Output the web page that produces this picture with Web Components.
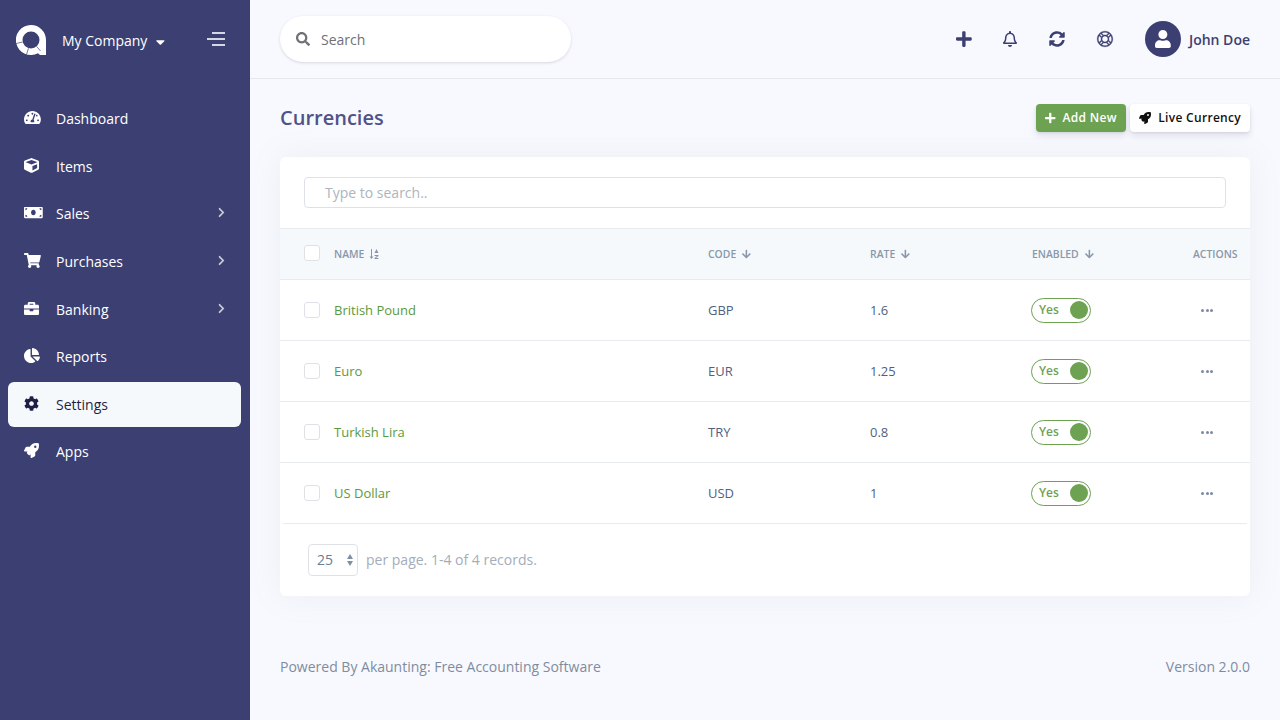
<!DOCTYPE html>
<html lang="en">
<head>
<meta charset="utf-8">
<title>Currencies</title>
<style>
    html, body { margin: 0; height: 100%; }
    body { font: 14px/1.5 "Open Sans", "Noto Sans", sans-serif; background: #f8f9fe; overflow: hidden; }
    app-shell { height: 720px; }
</style>
</head>
<body>

<app-shell>
    <side-bar slot="side">
        <nav-item icon="dash">Dashboard</nav-item>
        <nav-item icon="cube">Items</nav-item>
        <nav-item icon="money" arrow>Sales</nav-item>
        <nav-item icon="cart" arrow>Purchases</nav-item>
        <nav-item icon="case" arrow>Banking</nav-item>
        <nav-item icon="pie">Reports</nav-item>
        <nav-item icon="cog" active>Settings</nav-item>
        <nav-item icon="rocket">Apps</nav-item>
    </side-bar>
    <top-bar></top-bar>
    <page-head title="Currencies"></page-head>
    <data-card>
        <currency-row name="British Pound" code="GBP" rate="1.6"></currency-row>
        <currency-row name="Euro" code="EUR" rate="1.25"></currency-row>
        <currency-row name="Turkish Lira" code="TRY" rate="0.8"></currency-row>
        <currency-row name="US Dollar" code="USD" rate="1"></currency-row>
    </data-card>
    <page-foot></page-foot>
</app-shell>

<script>
    // font awesome 5 shapes, viewBox width first
    const ICONS = {
        dash: [576, 'M288 32C128.94 32 0 160.94 0 320c0 52.8 14.25 102.26 39.06 144.8 5.61 9.62 16.3 15.2 27.44 15.2h443c11.14 0 21.83-5.58 27.44-15.2C561.75 422.26 576 372.8 576 320c0-159.06-128.94-288-288-288zm0 64c14.71 0 26.58 10.13 30.32 23.65-1.11 2.26-2.64 4.23-3.45 6.67l-9.22 27.67c-5.13 3.49-10.97 6.01-17.64 6.01-17.67 0-32-14.33-32-32S270.33 96 288 96zM96 384c-17.67 0-32-14.33-32-32s14.33-32 32-32 32 14.33 32 32-14.33 32-32 32zm48-160c-17.67 0-32-14.33-32-32s14.33-32 32-32 32 14.33 32 32-14.33 32-32 32zm246.77-72.41l-61.33 184C343.13 347.33 352 364.54 352 384c0 11.72-3.38 22.55-8.88 32H232.88c-5.5-9.45-8.88-20.28-8.88-32 0-33.94 26.5-61.43 59.9-63.59l61.34-184.01c4.17-12.56 17.73-19.45 30.36-15.17 12.57 4.19 19.35 17.79 15.17 30.36zm14.66 57.2l15.52-46.55c3.47-1.29 7.13-2.23 11.05-2.23 17.67 0 32 14.33 32 32s-14.33 32-32 32c-11.38-.01-20.89-6.28-26.57-15.22zM480 384c-17.67 0-32-14.33-32-32s14.33-32 32-32 32 14.33 32 32-14.33 32-32 32z'],
        cube: [512, 'M239.1 6.3l-208 78c-18.7 7-31.1 25-31.1 45v225.1c0 18.2 10.3 34.8 26.5 42.9l208 104c13.5 6.8 29.4 6.8 42.9 0l208-104c16.3-8.1 26.5-24.8 26.5-42.9V129.3c0-20-12.4-37.9-31.1-44.9l-208-78C262 2.2 250 2.2 239.1 6.3zM256 68.4l192 72v1.1l-192 78-192-78v-1.1l192-72zm32 356V275.5l160-65v133.9l-160 80z'],
        money: [640, 'M608 64H32C14.33 64 0 78.33 0 96v320c0 17.67 14.33 32 32 32h576c17.67 0 32-14.33 32-32V96c0-17.67-14.33-32-32-32zM48 400v-64c35.35 0 64 28.65 64 64H48zm0-224v-64h64c0 35.35-28.65 64-64 64zm272 176c-44.19 0-80-42.99-80-96 0-53.02 35.82-96 80-96s80 42.98 80 96c0 53.03-35.83 96-80 96zm272 48h-64c0-35.35 28.65-64 64-64v64zm0-224c-35.35 0-64-28.65-64-64h64v64z'],
        cart: [576, 'M528.12 301.319l47.273-208C578.806 78.301 567.391 64 551.99 64H159.208l-9.166-44.81C147.758 8.021 137.93 0 126.529 0H24C10.745 0 0 10.745 0 24v16c0 13.255 10.745 24 24 24h69.883l70.248 343.435C147.325 417.1 136 435.222 136 456c0 30.928 25.072 56 56 56s56-25.072 56-56c0-15.674-6.447-29.835-16.824-40h209.647C430.447 426.165 424 440.326 424 456c0 30.928 25.072 56 56 56s56-25.072 56-56c0-22.172-12.888-41.332-31.579-50.405l5.517-24.276c3.413-15.018-8.002-29.319-23.403-29.319H218.117l-6.545-32h293.145c11.206 0 20.92-7.754 23.403-18.681z'],
        case: [512, 'M320 336c0 8.84-7.16 16-16 16h-96c-8.84 0-16-7.16-16-16v-48H0v144c0 25.6 22.4 48 48 48h416c25.6 0 48-22.4 48-48V288H320v48zm144-208h-80V80c0-25.6-22.4-48-48-48H176c-25.6 0-48 22.4-48 48v48H48c-25.6 0-48 22.4-48 48v80h512v-80c0-25.6-22.4-48-48-48zm-144 0H192V96h128v32z'],
        pie: [544, 'M527.79 288H290.5l158.03 158.03c6.04 6.04 15.98 6.53 22.19.68 38.7-36.46 65.32-85.61 73.13-140.86 1.34-9.46-6.51-17.85-16.06-17.85zm-15.83-64.8C503.72 103.74 408.26 8.28 288.8.04 279.68-.59 272 7.1 272 16.24V240h223.77c9.14 0 16.82-7.68 16.19-16.8zM224 288V50.71c0-9.55-8.39-17.4-17.84-16.06C86.99 51.49-4.1 155.6.14 280.37 4.5 408.51 114.83 513.59 243.03 511.98c50.4-.63 96.97-16.87 135.26-44.03 7.9-5.6 8.42-17.23 1.57-24.08L224 288z'],
        cog: [512, 'M487.4 315.7l-42.6-24.6c4.3-23.2 4.3-47 0-70.2l42.6-24.6c4.9-2.8 7.1-8.6 5.5-14-11.1-35.6-30-67.8-54.7-94.6-3.8-4.1-10-5.1-14.8-2.3L380.8 110c-17.9-15.4-38.5-27.3-60.8-35.1V25.8c0-5.6-3.9-10.5-9.4-11.7-36.7-8.2-74.3-7.8-109.2 0-5.5 1.2-9.4 6.1-9.4 11.7V75c-22.2 7.9-42.8 19.8-60.8 35.1L88.7 85.5c-4.9-2.8-11-1.9-14.8 2.3-24.7 26.7-43.6 58.9-54.7 94.6-1.7 5.4.6 11.2 5.5 14L67.3 221c-4.3 23.2-4.3 47 0 70.2l-42.6 24.6c-4.9 2.8-7.1 8.6-5.5 14 11.1 35.6 30 67.8 54.7 94.6 3.8 4.1 10 5.1 14.8 2.3l42.6-24.6c17.9 15.4 38.5 27.3 60.8 35.1v49.2c0 5.6 3.9 10.5 9.4 11.7 36.7 8.2 74.3 7.8 109.2 0 5.5-1.2 9.4-6.1 9.4-11.7v-49.2c22.2-7.9 42.8-19.8 60.8-35.1l42.6 24.6c4.9 2.8 11 1.9 14.8-2.3 24.7-26.7 43.6-58.9 54.7-94.6 1.5-5.5-.7-11.3-5.6-14.1zM256 336c-44.1 0-80-35.9-80-80s35.9-80 80-80 80 35.9 80 80-35.9 80-80 80z'],
        rocket: [512, 'M505.12 19.09c-1.19-5.53-6.66-11-12.21-12.18C460.72 0 435.51 0 410.41 0 307.18 0 245.27 55.2 199.05 128H94.84c-16.35.02-35.56 11.88-42.89 26.48L2.52 253.3A28.4 28.4 0 0 0 0 264a24 24 0 0 0 24 24h103.81l-22.47 22.47c-11.37 11.36-13 32.26 0 45.25l50.9 50.9c11.16 11.19 32.16 13.16 45.28 0L224 384.16V488a24 24 0 0 0 24 24 28.56 28.56 0 0 0 10.71-2.52l98.73-49.39c14.63-7.3 26.51-26.5 26.51-42.86V312.8c72.6-46.31 128.03-108.41 128.03-211.1.1-25.2.1-50.4-6.86-82.61zM384.04 168a40 40 0 1 1 40.01-40 40.02 40.02 0 0 1-40.01 40z'],
        right: [320, 'M285.476 272.971L91.132 467.314c-9.373 9.373-24.569 9.373-33.941 0l-22.667-22.667c-9.357-9.357-9.375-24.522-.04-33.901L188.505 256 34.484 101.255c-9.335-9.379-9.317-24.544.04-33.901l22.667-22.667c9.373-9.373 24.569-9.373 33.941 0L285.475 239.03c9.373 9.372 9.373 24.568.001 33.941z'],
        caret: [320, 'M31.3 192h257.3c17.8 0 26.7 21.5 14.1 34.1L174.1 354.8c-7.8 7.8-20.5 7.8-28.3 0L17.2 226.1C4.6 213.5 13.5 192 31.3 192z'],
        search: [512, 'M505 442.7L405.3 343c-4.5-4.5-10.6-7-17-7H372c27.6-35.3 44-79.7 44-128C416 93.1 322.9 0 208 0S0 93.1 0 208s93.1 208 208 208c48.3 0 92.7-16.4 128-44v16.3c0 6.4 2.5 12.5 7 17l99.7 99.7c9.4 9.4 24.6 9.4 33.9 0l28.3-28.3c9.4-9.4 9.4-24.6.1-34zM208 336c-70.7 0-128-57.2-128-128 0-70.7 57.2-128 128-128 70.7 0 128 57.2 128 128 0 70.7-57.2 128-128 128z'],
        plus: [448, 'M416 208H272V64c0-17.67-14.33-32-32-32h-32c-17.67 0-32 14.33-32 32v144H32c-17.67 0-32 14.33-32 32v32c0 17.67 14.33 32 32 32h144v144c0 17.67 14.33 32 32 32h32c17.67 0 32-14.33 32-32V304h144c17.67 0 32-14.33 32-32v-32c0-17.67-14.33-32-32-32z'],
        bell: [448, 'M224 512c35.32 0 63.97-28.65 63.97-64H160.03c0 35.35 28.65 64 63.97 64zm215.39-149.71c-19.32-20.76-55.47-51.99-55.47-154.29 0-77.7-54.48-139.9-127.94-155.16V32c0-17.67-14.32-32-31.98-32s-31.98 14.33-31.98 32v20.84C118.56 68.1 64.08 130.3 64.08 208c0 102.3-36.15 133.53-55.47 154.29-6 6.45-8.66 14.16-8.61 21.71.11 16.4 12.98 32 32.1 32h383.8c19.12 0 32-15.6 32.1-32 .05-7.55-2.61-15.27-8.61-21.71zM67.53 368c21.22-27.97 44.42-74.33 44.53-159.42 0-.2-.06-.38-.06-.58 0-61.86 50.14-112 112-112s112 50.14 112 112c0 .2-.06.38-.06.58.11 85.1 23.31 131.46 44.53 159.42H67.53z'],
        sync: [512, 'M370.72 133.28C339.458 104.008 298.888 87.962 255.848 88c-77.458.068-144.328 53.178-162.791 126.85-1.344 5.363-6.122 9.15-11.651 9.15H24.103c-7.498 0-13.194-6.807-11.807-14.176C33.933 94.924 134.813 8 256 8c66.448 0 126.791 26.136 171.315 68.685L463.03 40.97C478.149 25.851 504 36.559 504 57.941V192c0 13.255-10.745 24-24 24H345.941c-21.382 0-32.09-25.851-16.971-40.971l41.75-41.749zM32 296h134.059c21.382 0 32.09 25.851 16.971 40.971l-41.75 41.75c31.262 29.273 71.835 45.319 114.876 45.28 77.418-.07 144.315-53.144 162.787-126.849 1.344-5.363 6.122-9.15 11.651-9.15h57.304c7.498 0 13.194 6.807 11.807 14.176C478.067 417.076 377.187 504 256 504c-66.448 0-126.791-26.136-171.315-68.685L48.97 471.03C33.851 486.149 8 475.441 8 454.059V320c0-13.255 10.745-24 24-24z'],
        ring: [512, 'M256 8C119.033 8 8 119.033 8 256s111.033 248 248 248 248-111.033 248-248S392.967 8 256 8zm168.766 113.176l-62.885 62.885a128.711 128.711 0 0 0-33.941-33.941l62.885-62.885a217.323 217.323 0 0 1 33.941 33.941zM256 352c-52.935 0-96-43.065-96-96s43.065-96 96-96 96 43.065 96 96-43.065 96-96 96zM363.952 68.853l-66.14 66.14c-26.99-9.325-56.618-9.33-83.624 0l-66.139-66.14c66.716-38.524 149.23-38.499 215.903 0zM121.176 87.234l62.885 62.885a128.711 128.711 0 0 0-33.941 33.941l-62.885-62.885a217.323 217.323 0 0 1 33.941-33.941zm-52.323 60.814l66.139 66.14c-9.325 26.99-9.33 56.618 0 83.624l-66.139 66.14c-38.523-66.715-38.5-149.229 0-215.904zm18.381 242.776l62.885-62.885a128.711 128.711 0 0 0 33.941 33.941l-62.885 62.885a217.366 217.366 0 0 1-33.941-33.941zm60.814 52.323l66.139-66.14c26.99 9.325 56.618 9.33 83.624 0l66.14 66.14c-66.716 38.524-149.23 38.499-215.903 0zm242.776-18.381l-62.885-62.885a128.711 128.711 0 0 0 33.941-33.941l62.885 62.885a217.323 217.323 0 0 1-33.941 33.941zm52.323-60.814l-66.14-66.14c9.325-26.99 9.33-56.618 0-83.624l66.14-66.14c38.523 66.715 38.5 149.229 0 215.904z'],
        user: [448, 'M224 256c70.7 0 128-57.3 128-128S294.7 0 224 0 96 57.3 96 128s57.3 128 128 128zm89.6 32h-16.7c-22.2 10.2-46.9 16-72.9 16s-50.6-5.8-72.9-16h-16.7C60.2 288 0 348.2 0 422.4V464c0 26.5 21.5 48 48 48h352c26.5 0 48-21.5 48-48v-41.6c0-74.2-60.2-134.4-134.4-134.4z'],
        down: [448, 'M413.1 222.5l22.2 22.2c9.4 9.4 9.4 24.6 0 33.9L241 473c-9.4 9.4-24.6 9.4-33.9 0L12.7 278.6c-9.4-9.4-9.4-24.6 0-33.9l22.2-22.2c9.5-9.5 25-9.3 34.3.4L184 343.4V56c0-13.3 10.7-24 24-24h32c13.3 0 24 10.7 24 24v287.4l114.8-120.5c9.3-9.8 24.8-10 34.3-.4z']
    };

    const define = (tag, css, html) => {
        customElements.define(tag, class extends HTMLElement {
            connectedCallback() {
                if (this.shadowRoot) return;
                const root = this.attachShadow({mode: 'open'});
                const body = typeof html === 'function' ? html(this) : html;
                root.innerHTML = '<style>' + css + '</style>' + body;
            }
        });
    };

    // icon: size is its height, colour comes from currentColor, heavy thickens thin outlines
    define('fa-icon', ':host { display: inline-flex; line-height: 0; } svg { display: block; fill: currentColor; overflow: visible; }', el => {
        const [w, d] = ICONS[el.getAttribute('name')];
        const h = +el.getAttribute('size') || 14;
        const heavy = el.getAttribute('heavy');
        const stroke = heavy ? ` stroke="currentColor" stroke-width="${heavy}"` : '';
        return `<svg width="${w / 512 * h}" height="${h}" viewBox="0 0 ${w} 512"><path d="${d}"${stroke}/></svg>`;
    });

    define('app-shell', `
        :host { display: grid; grid-template-columns: 250px 1fr; grid-template-rows: auto auto auto 1fr; }
        ::slotted(side-bar) { grid-row: 1 / 5; }
    `, '<slot name="side"></slot><slot></slot>');

    define('side-bar', `
        :host { display: flex; flex-direction: column; background: #3c3f72; color: #fff; }
        .brand { display: flex; align-items: center; height: 80px; padding-left: 16px; margin-bottom: 16.2px; }
        .brand svg.logo { display: block; }
        .name { margin-left: 16px; color: #fff; font-weight: 500; }
        .caret { margin-left: 9px; margin-top: 3px; color: #fff; }
        .burger { margin-left: auto; margin-right: 25px; margin-top: -2px; display: flex; flex-direction: column; align-items: flex-end; gap: 4px; }
        .burger i { display: block; height: 2px; width: 13px; background: #d6d7e4; }
        .burger i:nth-child(2) { width: 18px; }
        nav { display: flex; flex-direction: column; gap: 2.6px; padding: 0 9px 0 8px; }
    `, `
        <div class="brand">
            <svg class="logo" width="30" height="30" viewBox="0 0 30 30">
                <path fill="#fff" fill-rule="evenodd" d="M15 0A15 15 0 0 1 30 15V30H24L22 28.2A15 15 0 1 1 15 0ZM15 6.500A8.500 8.500 0 1 0 15 23.500A8.500 8.500 0 1 0 15 6.500Z"/>
                <g stroke="#3c3f72" stroke-width=".9" opacity=".75">
                    <path d="M6.700 17L.2 18.500"/>
                    <path d="M12.500 23.200L10.500 29.500"/>
                    <path d="M20.700 21.500L24.500 26"/>
                </g>
            </svg>
            <span class="name">My Company</span>
            <fa-icon class="caret" name="caret" size="14"></fa-icon>
            <div class="burger"><i></i><i></i><i></i></div>
        </div>
        <nav><slot></slot></nav>
    `);

    define('nav-item', `
        :host { display: flex; align-items: center; height: 45px; padding: 0 16px 0 16px; border-radius: 6px; color: #fff; font-weight: 500; }
        :host([active]) { background: #f6f9fc; color: #1e1f45; }
        .ico { width: 32px; display: flex; align-items: center; margin-top: -2px; }
        .arrow { margin-left: auto; color: #c9cad9; margin-top: -2px; }
    `, el => `
        <span class="ico"><fa-icon name="${el.getAttribute('icon')}" size="15"></fa-icon></span>
        <slot></slot>
        ${el.hasAttribute('arrow') ? '<fa-icon class="arrow" name="right" size="11"></fa-icon>' : ''}
    `);

    define('top-bar', `
        :host { display: flex; align-items: center; height: 78px; border-bottom: 1px solid #e6e7ef; padding: 0 30px; color: #3c3f72; }
        .search { display: flex; align-items: center; width: 291px; height: 46px; box-sizing: border-box; padding-left: 16px; background: #fff; border-radius: 23px; box-shadow: 0 1px 3px rgba(50,50,93,.15), 0 1px 0 rgba(0,0,0,.02); color: #6f7177; }
        .search span { margin-left: 11px; }
        .tools { margin-left: auto; display: flex; align-items: center; }
        .tool { display: flex; justify-content: center; width: 20px; margin-right: 27px; }
        .tool:nth-child(1) { margin-right: 26px; }
        .tool:nth-child(3) { margin-right: 28px; }
        .avatar { width: 36px; height: 36px; border-radius: 50%; background: #3c3f72; color: #fff; display: flex; align-items: center; justify-content: center; margin: 0 8px 0 3px; }
        .user { font-weight: 600; letter-spacing: 0; }
    `, `
        <div class="search"><fa-icon name="search" size="14"></fa-icon><span>Search</span></div>
        <div class="tools">
            <span class="tool"><fa-icon name="plus" size="18"></fa-icon></span>
            <span class="tool"><fa-icon name="bell" size="16"></fa-icon></span>
            <span class="tool"><fa-icon name="sync" size="16"></fa-icon></span>
            <span class="tool"><fa-icon name="ring" size="16" heavy="14"></fa-icon></span>
            <span class="avatar"><fa-icon name="user" size="18"></fa-icon></span>
            <span class="user">John Doe</span>
        </div>
    `);

    define('page-head', `
        :host { display: flex; align-items: center; height: 78px; padding: 0 30px; }
        h1 { margin: 0; font-size: 20px; font-weight: 600; color: #4f5388; line-height: 1.5; }
        .btns { margin-left: auto; display: flex; gap: 4px; }
        .btn { display: flex; align-items: center; height: 28px; box-sizing: border-box; padding: 0 9px; border-radius: 4px; font-size: 12px; font-weight: 600; letter-spacing: .3px; box-shadow: 0 4px 6px rgba(50,50,93,.11), 0 1px 3px rgba(0,0,0,.08); }
        .add { background: #6da252; color: #fff; }
        .live { background: #fff; color: #111; }
        fa-icon { margin-right: 7.500px; }
    `, el => `
        <h1>${el.getAttribute('title')}</h1>
        <div class="btns">
            <span class="btn add"><fa-icon name="plus" size="12"></fa-icon>Add New</span>
            <span class="btn live"><fa-icon name="rocket" size="12"></fa-icon>Live Currency</span>
        </div>
    `);

    define('data-card', `
        :host { display: block; margin: 0 30px; background: #fff; border-radius: 6px; box-shadow: 0 0 2rem 0 rgba(136,152,170,.1); height: 439px; }
        .filter { padding: 20px 24px 20px; }
        .input { height: 31px; box-sizing: border-box; border: 1px solid #dee2e6; border-radius: 4px; padding-left: 20px; line-height: 29px; color: #adb5bd; }
        .head { display: grid; grid-template-columns: 30px 374px 162px 162px 1fr 45px; align-items: center; height: 52px; box-sizing: border-box; padding: 0 12px 0 24px; background: #f6f9fc; border-top: 1px solid #e9ecef; border-bottom: 1px solid #e9ecef; font-size: 10.400px; font-weight: 600; color: #8898aa; }
        .head > span { display: flex; align-items: center; }
        .head b { font-weight: inherit; margin-top: 2px; }
        .head fa-icon { margin-left: 6px; }
        .box { display: block; width: 16px; height: 16px; margin-top: -2px; box-sizing: border-box; border: 1px solid #dee2e6; border-radius: 3px; background: #fff; }
        .sort { margin-left: 5px; display: block; }
        .pager { display: flex; align-items: center; padding: 20px 28px; color: #a3adbb; }
        .pager b { font-weight: inherit; margin-top: -2px; }
        .sel { position: relative; width: 50px; height: 32px; box-sizing: border-box; border: 1px solid #dee2e6; border-radius: 4px; line-height: 30px; padding-left: 8px; margin-right: 8px; color: #6b7c93; }
        .sel i { position: absolute; right: 4px; width: 0; height: 0; border-left: 3.500px solid transparent; border-right: 3.500px solid transparent; }
        .sel i.u { top: 9px; border-bottom: 5px solid #7f8ea5; }
        .sel i.d { top: 16px; border-top: 5px solid #7f8ea5; }
    `, () => `
        <div class="filter"><div class="input">Type to search..</div></div>
        <div class="head">
            <span><i class="box"></i></span>
            <span><b>NAME</b><svg class="sort" width="10" height="10" viewBox="0 0 10 10" fill="#8898aa"><path d="M2 0h1v7.500h1.500L2.500 10 .5 7.500H2z"/><path d="M7.500 0L9.500 4H5.500z"/><path d="M5.500 6h4v1l-2.500 2h2.500v1h-4V9l2.500-2h-2.500z"/></svg></span>
            <span><b>CODE</b><fa-icon name="down" size="10"></fa-icon></span>
            <span><b>RATE</b><fa-icon name="down" size="10"></fa-icon></span>
            <span><b>ENABLED</b><fa-icon name="down" size="10"></fa-icon></span>
            <span><b>ACTIONS</b></span>
        </div>
        <slot></slot>
        <div class="pager">
            <span class="sel">25<i class="u"></i><i class="d"></i></span>
            <b>per page. 1-4 of 4 records.</b>
        </div>
    `);

    define('currency-row', `
        :host { display: grid; grid-template-columns: 30px 374px 162px 162px 1fr 45px; align-items: center; height: 61px; box-sizing: border-box; padding: 0 12px 0 24px; border-bottom: 1px solid #e9ecef; color: #525f7f; font-size: 13px; }
        :host(:last-child) { margin: 0 3px; padding: 0 9px 0 21px; }
        .box { display: block; width: 16px; height: 16px; box-sizing: border-box; border: 1px solid #dee2e6; border-radius: 3px; }
        .t { margin-top: 2px; }
        .name { color: #5b9a3d; }
        .toggle { display: flex; align-items: center; justify-content: space-between; width: 60px; height: 25px; margin-left: -1px; box-sizing: border-box; border: 1px solid #6da252; border-radius: 13px; padding: 0 2px 0 7px; font-size: 12px; font-weight: 600; color: #6da252; }
        .toggle i { display: block; width: 18px; height: 18px; border-radius: 50%; background: #6da252; }
        .dots { display: flex; gap: 1.500px; margin-left: 8px; }
        .dots i { display: block; width: 3px; height: 3px; border-radius: 50%; background: #7c8aa3; }
    `, el => `
        <span><i class="box"></i></span>
        <span class="t name">${el.getAttribute('name')}</span>
        <span class="t">${el.getAttribute('code')}</span>
        <span class="t">${el.getAttribute('rate')}</span>
        <span><span class="toggle">Yes<i></i></span></span>
        <span class="dots"><i></i><i></i><i></i></span>
    `);

    define('page-foot', `
        :host { display: flex; justify-content: space-between; padding: 60px 30px 0; color: #7f8c9f; }
    `, '<span>Powered By Akaunting: Free Accounting Software</span><span>Version 2.0.0</span>');
</script>
</body>
</html>
